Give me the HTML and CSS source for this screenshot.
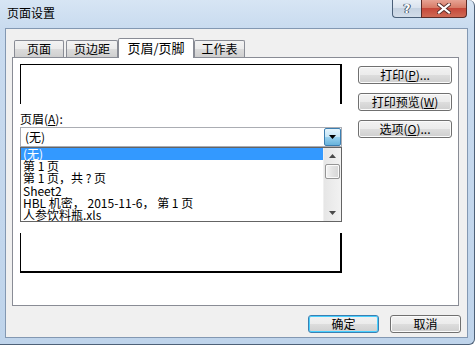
FILE: index.html
```html
<!DOCTYPE html>
<html lang="zh-CN">

<head>
    <meta charset="UTF-8">
    <title>页面设置</title>
    <link rel="stylesheet" href="styles.css">
</head>

<body>
    <div class="window">
        <div class="titlebar">
            <span class="title">页面设置</span>
            <div class="caption-buttons">
                <button class="cap help" type="button">?</button>
                <button class="cap close" type="button">
                    <svg width="14" height="11" viewBox="0 0 14 11">
                        <path d="M2 1.5 L12 9.5 M12 1.5 L2 9.5" stroke="#5a2e2a" stroke-width="4" stroke-linecap="square" />
                        <path d="M2 1.5 L12 9.5 M12 1.5 L2 9.5" stroke="#ffffff" stroke-width="2.2" stroke-linecap="square" />
                    </svg>
                </button>
            </div>
        </div>

        <div class="client">
            <div class="tabs">
                <div class="tab tab-page">页面</div>
                <div class="tab tab-margin">页边距</div>
                <div class="tab tab-header active">页眉/页脚</div>
                <div class="tab tab-sheet">工作表</div>
            </div>

            <div class="panel">
                <div class="left-col">
                    <div class="preview preview-top"></div>
                    <label class="field-label">页眉(<u>A</u>):</label>
                    <div class="combo">
                        <span class="combo-value">(无)</span>
                        <span class="combo-arrow">
                            <svg width="7" height="4" viewBox="0 0 7 4"><path d="M0 0 H7 L3.5 4 Z" fill="#000" /></svg>
                        </span>
                        <div class="dropdown">
                            <ul class="options">
                                <li class="selected">(无)</li>
                                <li>第 1 页</li>
                                <li>第 1 页，共 ? 页</li>
                                <li>Sheet2</li>
                                <li>HBL 机密， 2015-11-6， 第 1 页</li>
                                <li>人参饮料瓶.xls</li>
                            </ul>
                            <div class="scrollbar">
                                <span class="scroll-arrow">
                                    <svg width="7" height="4" viewBox="0 0 7 4"><path d="M0 4 H7 L3.5 0 Z" fill="#4a4a4a" /></svg>
                                </span>
                                <span class="scroll-thumb"></span>
                                <span class="scroll-track"></span>
                                <span class="scroll-arrow">
                                    <svg width="7" height="4" viewBox="0 0 7 4"><path d="M0 0 H7 L3.5 4 Z" fill="#4a4a4a" /></svg>
                                </span>
                            </div>
                        </div>
                    </div>
                    <div class="preview preview-bottom"></div>
                </div>

                <div class="right-col">
                    <button class="btn side-btn" type="button">打印(<u>P</u>)...</button>
                    <button class="btn side-btn" type="button">打印预览(<u>W</u>)</button>
                    <button class="btn side-btn" type="button">选项(<u>O</u>)...</button>
                </div>
            </div>

            <div class="footer-buttons">
                <button class="btn footer-btn default" type="button">确定</button>
                <button class="btn footer-btn" type="button">取消</button>
            </div>
        </div>
    </div>
</body>

</html>
```

FILE: styles.css
```css
body {
    margin: 0;
    font-family: "Noto Sans CJK SC", "Liberation Sans", sans-serif;
    font-size: 12px;
    color: #000;
    background: #ffffff;
}

.window {
    width: 475px;
    height: 345px;
    box-sizing: border-box;
    display: flex;
    flex-direction: column;
    background: linear-gradient(to bottom, #d7e5f4 0px, #c9dbef 28px, #bfd4eb 100%);
    border-right: 1px solid #4e6178;
    border-bottom: 1px solid #4e6178;
    border-radius: 0 6px 6px 0;
}

.titlebar {
    height: 28px;
    flex-shrink: 0;
    display: flex;
    justify-content: space-between;
    align-items: flex-start;
    padding: 0 7px 0 7px;
}

.title {
    margin-top: 6px;
    line-height: 14px;
    font-size: 12px;
}

.caption-buttons {
    display: flex;
}

.cap {
    height: 18px;
    padding: 0;
    margin: 0;
    display: flex;
    align-items: center;
    justify-content: center;
    border: 1px solid #4a5f78;
    border-top: none;
}

.help {
    width: 29px;
    border-right: none;
    border-radius: 0 0 0 4px;
    background: linear-gradient(to bottom, #e9eff6 0%, #dae3ee 45%, #c5d2e1 50%, #d3dde9 100%);
    color: #ffffff;
    font-family: "DejaVu Sans", sans-serif;
    font-weight: bold;
    font-size: 12px;
    text-shadow: 0 0 1px #40526a, 0 0 1px #40526a, 1px 0 0 #40526a, -1px 0 0 #40526a;
}

.close {
    width: 46px;
    border-radius: 0 0 4px 0;
    background: linear-gradient(to bottom, #e7a394 0%, #d77b67 45%, #c6483a 50%, #cf6a55 100%);
    border-color: #5b2b27;
}

.client {
    flex: 1;
    margin: 0 6px 6px 5px;
    border: 1px solid #8398b2;
    background: #f0f0f0;
    padding: 9px 6px 0 6px;
    display: flex;
    flex-direction: column;
}

/* tabs */
.tabs {
    height: 19px;
    display: flex;
    align-items: flex-end;
    padding-left: 2px;
    position: relative;
    z-index: 1;
}

.tab {
    height: 17px;
    box-sizing: border-box;
    border: 1px solid #898c95;
    border-bottom: none;
    border-radius: 2px 2px 0 0;
    background: linear-gradient(to bottom, #f3f3f3 0%, #ebebeb 50%, #dcdcdc 51%, #cfcfcf 100%);
    text-align: center;
    line-height: 16px;
    font-size: 12px;
}

.tab-page {
    width: 50px;
    margin-right: 2px;
}

.tab-margin {
    width: 52px;
}

.tab-header {
    width: 76px;
}

.tab-sheet {
    width: 51px;
}

.tab.active {
    height: 20px;
    margin-bottom: -1px;
    background: #ffffff;
    line-height: 18px;
    font-size: 13px;
}

.panel {
    height: 249px;
    box-sizing: border-box;
    margin-right: 2px;
    border: 1px solid #898c95;
    background: #ffffff;
    display: flex;
    gap: 16px;
    padding: 6px 0 0 7px;
}

.left-col {
    width: 322px;
    display: flex;
    flex-direction: column;
}

.preview {
    width: 322px;
    height: 40px;
    box-sizing: border-box;
}

.preview-top {
    border-top: 1px solid #000;
    border-left: 1px solid #000;
    border-right: 2px solid #000;
}

.preview-bottom {
    margin-top: 86px;
    border-left: 1px solid #000;
    border-right: 2px solid #000;
    border-bottom: 2px solid #000;
}

.field-label {
    display: block;
    margin-top: 8px;
    margin-bottom: 2px;
    line-height: 13px;
    height: 13px;
}

.combo {
    position: relative;
    height: 20px;
    box-sizing: border-box;
    border: 1px solid #abadb3;
    display: flex;
    align-items: center;
}

.combo-value {
    padding-left: 4px;
    line-height: 14px;
}

.combo-arrow {
    position: absolute;
    right: 0;
    top: 0;
    width: 17px;
    height: 18px;
    box-sizing: border-box;
    border: 1px solid #3c7fb1;
    border-radius: 2px;
    background: linear-gradient(to bottom, #e5f4fc 0%, #c4e5f6 50%, #98d1ef 51%, #68b3db 100%);
    display: flex;
    align-items: center;
    justify-content: center;
}

/* open list of the combo */
.dropdown {
    position: absolute;
    top: 19px;
    left: -1px;
    width: 322px;
    height: 75px;
    box-sizing: border-box;
    border: 1px solid #646464;
    background: #ffffff;
    display: flex;
    z-index: 2;
}

.options {
    flex: 1;
    margin: 0;
    padding: 0;
    list-style: none;
}

.options li {
    height: 12.2px;
    line-height: 12px;
    padding-left: 2px;
    white-space: nowrap;
    font-size: 12px;
}

.options li.selected {
    background: #3399ff;
    color: #ffffff;
}

.scrollbar {
    width: 17px;
    display: flex;
    flex-direction: column;
    align-items: center;
    background: linear-gradient(to right, #e6e6e6, #f2f2f2);
    border-left: 1px solid #f0f0f0;
}

.scroll-arrow {
    height: 16px;
    display: flex;
    align-items: center;
    justify-content: center;
}

.scroll-thumb {
    width: 15px;
    height: 15px;
    box-sizing: border-box;
    border: 1px solid #959595;
    border-radius: 2px;
    background: linear-gradient(to right, #f4f4f4, #e2e2e2 50%, #d6d6d6);
    box-shadow: inset 0 0 0 1px #fafafa;
}

.scroll-track {
    flex: 1;
}

/* buttons */
.btn {
    font-family: "Noto Sans CJK SC", "Liberation Sans", sans-serif;
    font-size: 12px;
    color: #000;
    padding: 0;
    height: 18px;
    line-height: 14px;
    box-sizing: border-box;
    border: 1px solid #707070;
    border-radius: 3px;
    background: linear-gradient(to bottom, #f2f2f2 0%, #ebebeb 50%, #dddddd 51%, #cfcfcf 100%);
    box-shadow: inset 0 0 0 1px #fbfbfb;
}

.right-col {
    display: flex;
    flex-direction: column;
    gap: 9px;
    padding-top: 2px;
}

.side-btn {
    width: 94px;
}

.footer-buttons {
    display: flex;
    justify-content: flex-end;
    gap: 11px;
    padding-top: 9px;
}

.footer-btn {
    width: 71px;
}

.footer-btn.default {
    border-color: #3c7fb1;
    box-shadow: inset 0 0 0 1px #48d0ff;
}
```
